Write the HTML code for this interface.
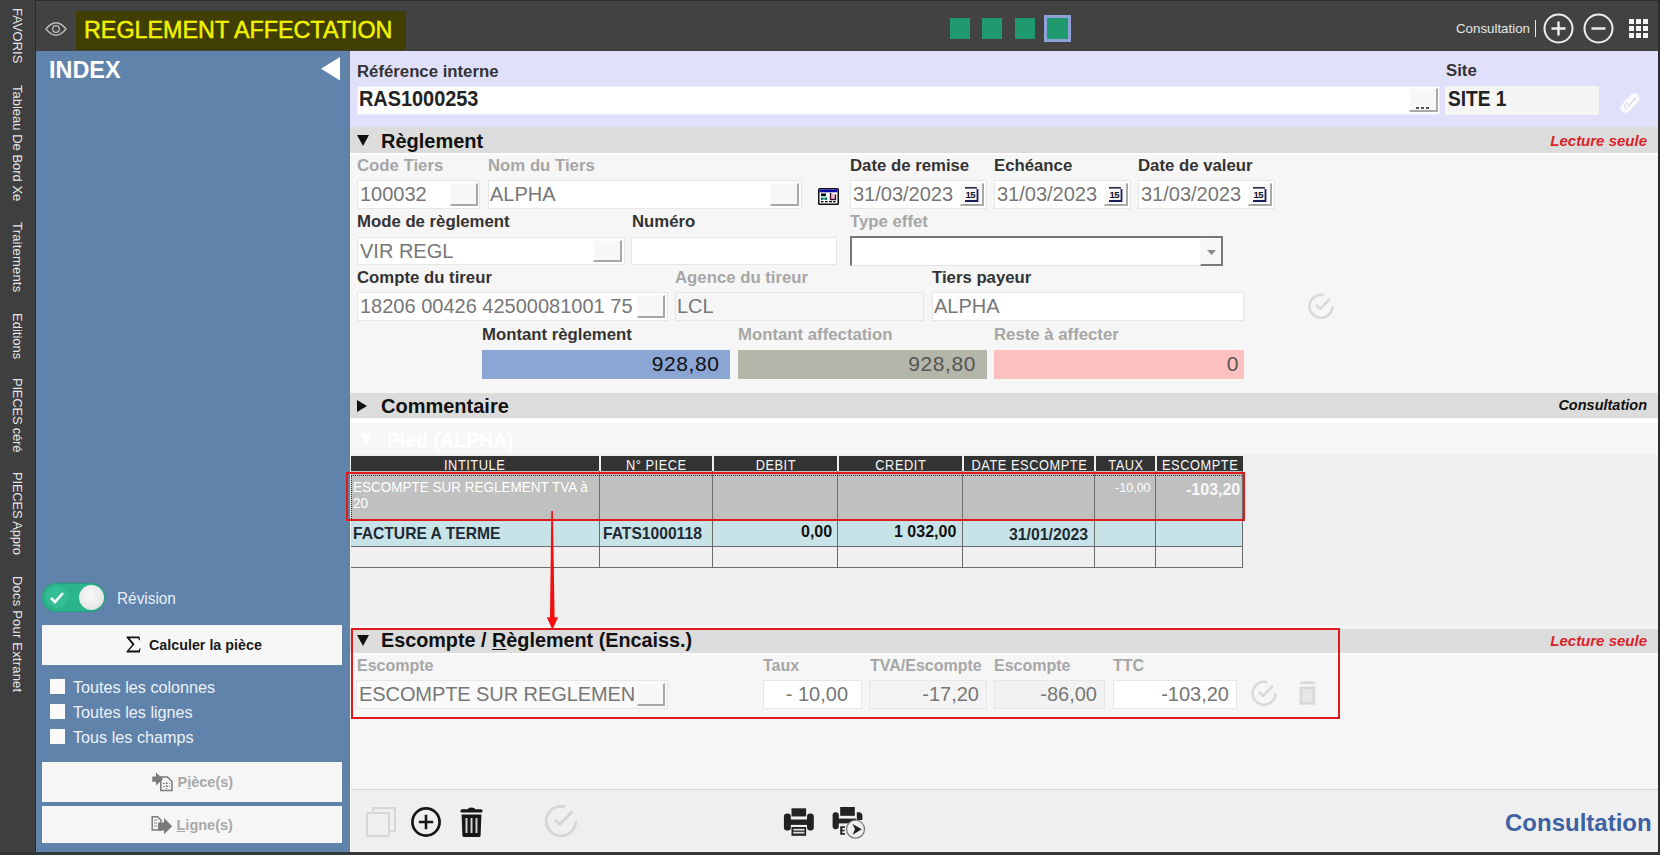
<!DOCTYPE html>
<html><head><meta charset="utf-8">
<style>
*{margin:0;padding:0;box-sizing:border-box}
html,body{width:1660px;height:855px;overflow:hidden;background:#2e2e2e;font-family:"Liberation Sans",sans-serif}
.a{position:absolute}
.vt{position:absolute;color:#e6e6e6;font-size:13px;white-space:nowrap;transform-origin:0 0;transform:rotate(90deg)}
.lbl{position:absolute;font-size:16px;font-weight:bold;color:#333;white-space:nowrap;line-height:1}

.inp{position:absolute;background:#fff;border:1px solid #e6e6e6;height:29px}
.val{position:absolute;font-size:20px;color:#777;white-space:nowrap;line-height:1}
.btn3{position:absolute;background:#f7f7f7;border-right:2px solid #a8a8a8;border-bottom:2px solid #a8a8a8;border-top:1px solid #fdfdfd;border-left:1px solid #fdfdfd}
.t{position:absolute;white-space:nowrap;line-height:1}
.lb{font-size:16.75px;font-weight:bold;color:#333}
.lg{color:#a6a6a6}
.hd{position:absolute;top:456px;height:15px;background:#333;color:#f6f6f6;font-size:14.5px;line-height:18px;text-align:center;white-space:nowrap;overflow:hidden}
.hd span{display:inline-block;transform:scaleX(0.885);letter-spacing:0.6px}
.nar{display:inline-block;transform-origin:0 0}
.band{position:absolute;left:350px;width:1308px;background:#dcdcdc}
.bt{position:absolute;font-size:19px;font-weight:bold;color:#111;white-space:nowrap;line-height:1}
</style></head><body>
<!-- left vertical sidebar -->
<div class="a" style="left:0;top:0;width:35px;height:855px;background:#3f3f3f"></div>
<div class="a" style="left:35px;top:0;width:1px;height:855px;background:#252a2e"></div>
<div class="vt" style="left:25px;top:8px">FAVORIS</div>
<div class="vt" style="left:25px;top:85px">Tableau De Bord Xe</div>
<div class="vt" style="left:25px;top:222px;letter-spacing:0.2px">Traitements</div>
<div class="vt" style="left:25px;top:313px">Editions</div>
<div class="vt" style="left:25px;top:378px;letter-spacing:-0.22px">PIECES céré</div>
<div class="vt" style="left:25px;top:472px;letter-spacing:-0.2px">PIECES Appro</div>
<div class="vt" style="left:25px;top:576px;letter-spacing:0.2px">Docs Pour Extranet</div>

<!-- top bar -->
<div class="a" style="left:36px;top:0;width:1624px;height:51px;background:#424242;border-top:1px solid #2c2c2c"></div>
<svg class="a" style="left:45px;top:21px" width="22" height="16" viewBox="0 0 22 16"><path d="M1 8 Q11 -4.5 21 8 Q11 20.5 1 8Z" fill="none" stroke="#bdbdbd" stroke-width="1.3"/><circle cx="11" cy="8" r="3.3" fill="none" stroke="#bdbdbd" stroke-width="1.3"/></svg>
<div class="a" style="left:76px;top:11px;width:330px;height:39px;background:#403e00"></div>
<div class="t" style="left:83.8px;top:17.5px;font-size:24.5px;color:#f2f200;-webkit-text-stroke:0.5px #f2f200"><span class="nar" style="transform:scaleX(0.952)">REGLEMENT AFFECTATION</span></div>
<div class="a" style="left:950px;top:18px;width:20px;height:21px;background:#1f9a6e"></div>
<div class="a" style="left:982px;top:18px;width:20px;height:21px;background:#1f9a6e"></div>
<div class="a" style="left:1015px;top:18px;width:20px;height:21px;background:#1f9a6e"></div>
<div class="a" style="left:1044px;top:15px;width:27px;height:27px;background:#1f9a6e;border:3.5px solid #8fa2d8"></div>
<div class="t" style="left:1456px;top:21.5px;font-size:13.3px;color:#e6e6e6">Consultation</div>
<div class="a" style="left:1535px;top:20px;width:1px;height:17px;background:#e6e6e6"></div>
<svg class="a" style="left:1543px;top:13px" width="32" height="32" viewBox="0 0 32 32"><circle cx="15.5" cy="15.5" r="14" fill="none" stroke="#eee" stroke-width="2"/><path d="M15.5 8.5v14M8.5 15.5h14" stroke="#eee" stroke-width="2.4"/></svg>
<svg class="a" style="left:1583px;top:13px" width="32" height="32" viewBox="0 0 32 32"><circle cx="15.5" cy="15.5" r="14" fill="none" stroke="#eee" stroke-width="2"/><path d="M8.5 15.5h14" stroke="#eee" stroke-width="2.4"/></svg>
<svg class="a" style="left:1628px;top:18px" width="22" height="22" viewBox="0 0 22 22" fill="#f4f4f4"><rect x="1" y="1" width="5" height="5"/><rect x="8" y="1" width="5" height="5"/><rect x="15" y="1" width="5" height="5"/><rect x="1" y="8" width="5" height="5"/><rect x="8" y="8" width="5" height="5"/><rect x="15" y="8" width="5" height="5"/><rect x="1" y="15" width="5" height="5"/><rect x="8" y="15" width="5" height="5"/><rect x="15" y="15" width="5" height="5"/></svg>

<!-- blue index panel -->
<div class="a" style="left:36px;top:51px;width:314px;height:801px;background:#6083ab;box-shadow:inset -2px 0 #66809e"></div>
<div class="t" style="left:49px;top:57.5px;font-size:24.5px;font-weight:bold;color:#fff"><span class="nar" style="transform:scaleX(0.955)">INDEX</span></div>
<svg class="a" style="left:321px;top:56.5px" width="20" height="24"><path d="M0 11.7 L19 0 L19 23.4Z" fill="#fff"/></svg>


<!-- sidebar bottom items -->
<div class="a" style="left:42px;top:583px;width:63px;height:29px;border-radius:15px;background:#2cb48b;box-shadow:inset 0 0 0 1px #22a07b"></div>
<div class="a" style="left:46px;top:586px;width:22px;height:22px;border-radius:11px;background:#34be95"></div>
<svg class="a" style="left:49px;top:591px" width="16" height="14"><path d="M2 7 L6 11 L14 2" fill="none" stroke="#f4fbf8" stroke-width="2.6"/></svg>
<div class="a" style="left:78.5px;top:585px;width:25px;height:25px;border-radius:50%;background:radial-gradient(circle at 45% 40%,#fafafa,#dcdcdc)"></div>
<div class="t" style="left:116.5px;top:591px;font-size:16px;color:#e9eff6"><span class="nar" style="transform:scaleX(0.96)">Révision</span></div>
<div class="a" style="left:42px;top:625px;width:300px;height:40px;background:#f7f7f7"></div>
<svg class="a" style="left:126px;top:636px" width="15" height="17" viewBox="0 0 15 17"><path d="M0.5 0.5H13.5L14 4.2H13L12.2 2.2H3.6L8.6 8.3L3 14.6H12.6L13.6 12.4H14.6L13.8 16.5H0.5V15.6L6.3 8.6L0.5 1.6Z" fill="#111"/></svg>
<div class="t" style="left:149px;top:637.5px;font-size:14.3px;font-weight:bold;color:#1a1a1a">Calculer la pièce</div>
<div class="a" style="left:50px;top:679px;width:15px;height:15px;background:#fafafa"></div>
<div class="a" style="left:50px;top:703.5px;width:15px;height:15px;background:#fafafa"></div>
<div class="a" style="left:50px;top:728.5px;width:15px;height:15px;background:#fafafa"></div>
<div class="t" style="left:73px;top:678.5px;font-size:16.2px;color:#eef2f7">Toutes les colonnes</div>
<div class="t" style="left:73px;top:703.5px;font-size:16.2px;color:#eef2f7">Toutes les lignes</div>
<div class="t" style="left:73px;top:728.5px;font-size:16.2px;color:#eef2f7">Tous les champs</div>
<div class="a" style="left:42px;top:762px;width:300px;height:40px;background:#f6f6f6"></div>
<div class="a" style="left:42px;top:806px;width:300px;height:37px;background:#f6f6f6"></div>
<svg class="a" style="left:151px;top:772px" width="23" height="20" viewBox="0 0 23 20"><path d="M9.8 5H16.5L21 9.5V18.6H9.8Z" fill="#f4f4f4" stroke="#7a7a7a" stroke-width="1.5"/><path d="M12 11.5H19M12 14.5H19M15.5 10V17" stroke="#888" stroke-width="1.2" stroke-dasharray="2 1"/><path d="M1.3 4.4H5V0.5L12 7L5 13.6V9.7H1.3Z" fill="#7a7a7a"/></svg>
<div class="t" style="left:177.5px;top:774.5px;font-size:14.5px;font-weight:bold;color:#a8a8a8">P<u>i</u>èce(s)</div>
<svg class="a" style="left:151px;top:816px" width="23" height="20" viewBox="0 0 23 20"><path d="M1.2 0.8H6.5L10 4.3V14H1.2Z" fill="#f4f4f4" stroke="#7a7a7a" stroke-width="1.5"/><path d="M3 4H6M3 7H6M3 10H6" stroke="#888" stroke-width="1.2"/><path d="M7 6.5H13V2L21.2 10.2L13 18.3V14.4H7Z" fill="#7a7a7a"/></svg>
<div class="t" style="left:176.5px;top:818px;font-size:14.5px;font-weight:bold;color:#a8a8a8"><u>L</u>igne(s)</div>

<!-- main panel -->
<div class="a" style="left:350px;top:51px;width:1308px;height:801px;background:#f6f6f6"></div>
<div class="a" style="left:350px;top:51px;width:1308px;height:76px;background:#e0e0fa"></div>
<div class="a" style="left:1658px;top:0;width:2px;height:855px;background:#2e2e2e"></div>
<div class="a" style="left:0;top:852px;width:1660px;height:3px;background:#303838"></div>


<!-- header lavender content -->
<div class="t lb" style="left:357px;top:63.7px">Référence interne</div>
<div class="inp" style="left:357px;top:86px;width:1083px;height:29px;border-color:#ececf6"></div>
<div class="btn3" style="left:1409px;top:88px;width:29px;height:24px"></div>
<div class="a" style="left:1416px;top:107px;width:3px;height:2px;background:#555"></div><div class="a" style="left:1421px;top:107px;width:3px;height:2px;background:#555"></div><div class="a" style="left:1426px;top:107px;width:3px;height:2px;background:#555"></div>
<div class="t" style="left:359px;top:88.5px;font-size:21.5px;font-weight:bold;color:#222"><span class="nar" style="transform:scaleX(0.925)">RAS1000253</span></div>
<div class="t lb" style="left:1446px;top:62.7px">Site</div>
<div class="a" style="left:1445px;top:86px;width:154px;height:29px;background:#f5f5f5"></div>
<div class="t" style="left:1448px;top:88.5px;font-size:21.5px;font-weight:bold;color:#222"><span class="nar" style="transform:scaleX(0.89)">SITE 1</span></div>
<svg class="a" style="left:1615px;top:88px" width="30" height="30" viewBox="0 0 30 30"><g transform="rotate(43 15 15)"><rect x="10.8" y="4.2" width="8.4" height="21.6" rx="4.2" fill="#fbfbff" stroke="#fbfbff" stroke-width="1.6"/><path d="M15.8 7.5V18.5" stroke="#d2d2de" stroke-width="1.4" stroke-linecap="round"/><path d="M12.8 16V20.5A2.2 2.2 0 0 0 17 20.5" fill="none" stroke="#dedeea" stroke-width="1.2"/></g></svg>

<!-- Reglement band -->
<div class="band" style="top:127px;height:26px"></div>
<div class="a" style="left:350px;top:153px;width:1308px;height:2px;background:#fdfdfd"></div>
<svg class="a" style="left:357px;top:135px" width="12" height="11"><path d="M0 0H12L6 11Z" fill="#111"/></svg>
<div class="t bt" style="left:381px;top:131px;font-size:20px">Règlement</div>
<div class="t" style="right:13px;top:133px;font-size:15px;font-weight:bold;font-style:italic;color:#db1f2a">Lecture seule</div>

<!-- row1 labels -->
<div class="t lb lg" style="left:357px;top:158.2px">Code Tiers</div>
<div class="t lb lg" style="left:488px;top:158.2px">Nom du Tiers</div>
<div class="t lb" style="left:850px;top:158.2px">Date de remise</div>
<div class="t lb" style="left:994px;top:158.2px">Echéance</div>
<div class="t lb" style="left:1138px;top:158.2px">Date de valeur</div>
<!-- row1 inputs -->
<div class="inp" style="left:357px;top:180px;width:123px"></div>
<div class="btn3" style="left:450px;top:183px;width:28px;height:23px"></div>
<div class="t val" style="left:360px;top:184px">100032</div>
<div class="inp" style="left:488px;top:180px;width:314px"></div>
<div class="btn3" style="left:770px;top:183px;width:29px;height:23px"></div>
<div class="t val" style="left:490px;top:184px">ALPHA</div>
<svg class="a" style="left:818px;top:188px" width="21" height="17" viewBox="0 0 21 17"><rect x="0.75" y="0.75" width="19.5" height="15.5" rx="0.8" fill="#fff" stroke="#111" stroke-width="1.5"/><rect x="1.5" y="1.5" width="18" height="2.8" fill="#0a0aa8"/><rect x="3" y="5.5" width="5" height="2.5" fill="#000"/><rect x="3" y="8" width="7" height="4" fill="#aef5e8"/><rect x="3" y="9.5" width="2.5" height="2.5" fill="#1e6e68"/><rect x="6.5" y="9.5" width="2.5" height="2.5" fill="#1e6e68"/><path d="M12.5 5V11.5H17.5V6.5" fill="#e8c0d0" stroke="#3a1030" stroke-width="1.4"/><rect x="3" y="13" width="2.5" height="1.3" fill="#000"/><rect x="7" y="13" width="2.5" height="1.3" fill="#000"/><rect x="11" y="13" width="3" height="1.3" fill="#000"/><rect x="15" y="13" width="2.5" height="1.3" fill="#000"/></svg>
<div class="inp" style="left:850px;top:180px;width:137px"></div>
<div class="btn3 cal" style="left:960px;top:183px;width:24px;height:23px"></div>
<div class="t val" style="left:853px;top:184px">31/03/2023</div>
<div class="inp" style="left:994px;top:180px;width:137px"></div>
<div class="btn3 cal" style="left:1104px;top:183px;width:24px;height:23px"></div>
<div class="t val" style="left:997px;top:184px">31/03/2023</div>
<div class="inp" style="left:1138px;top:180px;width:137px"></div>
<div class="btn3 cal" style="left:1248px;top:183px;width:24px;height:23px"></div>
<div class="t val" style="left:1141px;top:184px">31/03/2023</div>

<svg class="a" style="left:965px;top:187px" width="15" height="16" viewBox="0 0 15 16"><rect x="0" y="0" width="12" height="1.6" fill="#2a2a40"/><text x="0.5" y="11" font-family="Liberation Sans" font-weight="bold" font-size="9.5" fill="#111" letter-spacing="-0.5">15</text><path d="M12.5 2V14H0" fill="none" stroke="#1c1c58" stroke-width="1.8"/></svg>
<svg class="a" style="left:1109px;top:187px" width="15" height="16" viewBox="0 0 15 16"><rect x="0" y="0" width="12" height="1.6" fill="#2a2a40"/><text x="0.5" y="11" font-family="Liberation Sans" font-weight="bold" font-size="9.5" fill="#111" letter-spacing="-0.5">15</text><path d="M12.5 2V14H0" fill="none" stroke="#1c1c58" stroke-width="1.8"/></svg>
<svg class="a" style="left:1253px;top:187px" width="15" height="16" viewBox="0 0 15 16"><rect x="0" y="0" width="12" height="1.6" fill="#2a2a40"/><text x="0.5" y="11" font-family="Liberation Sans" font-weight="bold" font-size="9.5" fill="#111" letter-spacing="-0.5">15</text><path d="M12.5 2V14H0" fill="none" stroke="#1c1c58" stroke-width="1.8"/></svg>
<!-- row2 -->
<div class="t lb" style="left:357px;top:213.7px">Mode de règlement</div>
<div class="t lb" style="left:632px;top:213.7px">Numéro</div>
<div class="t lb lg" style="left:850px;top:213.7px">Type effet</div>
<div class="inp" style="left:357px;top:237px;width:268px;height:28px"></div>
<div class="btn3" style="left:593px;top:240px;width:29px;height:22px"></div>
<div class="t val" style="left:360px;top:240.5px">VIR REGL</div>
<div class="inp" style="left:631px;top:237px;width:206px;height:28px"></div>
<div class="a" style="left:850px;top:236px;width:373px;height:30px;background:#fff;border-top:2px solid #777;border-left:2px solid #777;border-bottom:1px solid #e4e4e4"></div>
<div class="a" style="left:1200px;top:238px;width:23px;height:28px;background:#f7f7f7;border-left:1px solid #fafafa;border-right:2px solid #7a7a7a;border-bottom:2px solid #7a7a7a"></div>
<svg class="a" style="left:1207px;top:250px" width="9" height="6"><path d="M0 0H9L4.5 5Z" fill="#8a8a8a"/></svg>

<!-- row3 -->
<div class="t lb" style="left:357px;top:270px">Compte du tireur</div>
<div class="t lb lg" style="left:675px;top:270px">Agence du tireur</div>
<div class="t lb" style="left:932px;top:270px">Tiers payeur</div>
<div class="inp" style="left:357px;top:292px;width:311px"></div>
<div class="btn3" style="left:637px;top:295px;width:28px;height:23px"></div>
<div class="t val" style="left:360px;top:296px">18206 00426 42500081001 75</div>
<div class="inp" style="left:675px;top:292px;width:249px;background:#f6f6f6"></div>
<div class="t val" style="left:677px;top:296px">LCL</div>
<div class="inp" style="left:932px;top:292px;width:312px"></div>
<div class="t val" style="left:934px;top:296px">ALPHA</div>
<svg class="a" style="left:1306.5px;top:292.7px" width="28" height="28" viewBox="0 0 28 28"><path d="M16.98 2.19 A11.5 11.5 0 1 0 25.5 13.3" fill="none" stroke="#d9d9d9" stroke-width="2.5"/><path d="M9 12.3 L13.3 15.8 L23 5.7" fill="none" stroke="#d9d9d9" stroke-width="2.5"/></svg>

<!-- row4 -->
<div class="t lb" style="left:482px;top:327.2px">Montant règlement</div>
<div class="t lb lg" style="left:738px;top:327.2px">Montant affectation</div>
<div class="t lb lg" style="left:994px;top:327.2px">Reste à affecter</div>
<div class="a" style="left:482px;top:350px;width:248px;height:29px;background:#8ba6d4"></div>
<div class="t" style="right:940.5px;top:353px;font-size:21px;color:#111;letter-spacing:0.6px">928,80</div>
<div class="a" style="left:738px;top:350px;width:249px;height:29px;background:#b5b6aa"></div>
<div class="t" style="right:684px;top:353px;font-size:21px;color:#555;letter-spacing:0.6px">928,80</div>
<div class="a" style="left:994px;top:350px;width:250px;height:29px;background:#ffc0c0"></div>
<div class="t" style="right:421.5px;top:353px;font-size:21px;color:#555">0</div>

<!-- Commentaire band -->
<div class="band" style="top:393px;height:25px"></div>
<svg class="a" style="left:357px;top:400px" width="11" height="12"><path d="M0 0V12L10 6Z" fill="#111"/></svg>
<div class="t bt" style="left:381px;top:395.5px;font-size:20px">Commentaire</div>
<div class="t" style="right:13px;top:398px;font-size:14.5px;font-weight:bold;font-style:italic;color:#111">Consultation</div>
<div class="a" style="left:350px;top:418px;width:1308px;height:5px;background:#fff"></div>
<div class="a" style="left:350px;top:423px;width:1308px;height:31px;background:#f7f7f7"></div>
<div class="a" style="left:350px;top:454px;width:1308px;height:171px;background:#efefef"></div>
<svg class="a" style="left:360px;top:433px" width="12" height="11"><path d="M0 0H12L6 11Z" fill="#fff"/></svg>
<div class="t bt" style="left:387px;top:431px;font-size:19.5px;color:#fff">Pied (ALPHA)</div>


<!-- table -->
<div class="a" style="left:351px;top:456px;width:892px;height:15px;background:#f0f0f0"></div>
<div class="hd" style="left:351px;width:248px"><span>INTITULE</span></div>
<div class="hd" style="left:601px;width:111px"><span>N° PIECE</span></div>
<div class="hd" style="left:714px;width:123px"><span>DEBIT</span></div>
<div class="hd" style="left:839px;width:123px"><span>CREDIT</span></div>
<div class="hd" style="left:964px;width:130px"><span>DATE ESCOMPTE</span></div>
<div class="hd" style="left:1096px;width:59px"><span>TAUX</span></div>
<div class="hd" style="left:1157px;width:86px"><span>ESCOMPTE</span></div>
<div class="a" style="left:351px;top:471px;width:892px;height:50px;background:#c0c0c0"></div>
<div class="a" style="left:351px;top:521px;width:892px;height:25px;background:#c8e3e7"></div>
<div class="a" style="left:351px;top:546px;width:892px;height:1px;background:#6c6c6c"></div>
<div class="a" style="left:351px;top:547px;width:892px;height:20px;background:#f0f0f0"></div>
<div class="a" style="left:351px;top:567px;width:892px;height:1px;background:#6c6c6c"></div>
<div class="a" style="left:1242px;top:471px;width:1px;height:97px;background:#6c6c6c"></div>
<div class="a" style="left:599px;top:471px;width:1px;height:97px;background:#6c6c6c"></div>
<div class="a" style="left:712px;top:471px;width:1px;height:97px;background:#6c6c6c"></div>
<div class="a" style="left:837px;top:471px;width:1px;height:97px;background:#6c6c6c"></div>
<div class="a" style="left:962px;top:471px;width:1px;height:97px;background:#6c6c6c"></div>
<div class="a" style="left:1094px;top:471px;width:1px;height:97px;background:#6c6c6c"></div>
<div class="a" style="left:1155px;top:471px;width:1px;height:97px;background:#6c6c6c"></div>
<div class="a" style="left:351px;top:475px;width:891px;height:44px;border:1px dotted #333;border-right:none;border-bottom:none"></div>
<div class="t" style="left:353px;top:479px;font-size:15px;color:#fff;line-height:16px"><span class="nar" style="transform:scaleX(0.9)">ESCOMPTE SUR REGLEMENT TVA à<br>20</span></div>
<div class="t" style="left:1115px;top:480.5px;font-size:13.5px;color:#fff;line-height:1"><span class="nar" style="transform:scaleX(0.93)">-10,00</span></div>
<div class="t" style="left:1186px;top:481.5px;font-size:16px;font-weight:bold;color:#f8f8f8">-103,20</div>
<div class="t" style="left:353px;top:525px;font-size:17px;font-weight:bold;color:#1e2a33"><span class="nar" style="transform:scaleX(0.92)">FACTURE A TERME</span></div>
<div class="t" style="left:603px;top:525px;font-size:17px;font-weight:bold;color:#1e2a33"><span class="nar" style="transform:scaleX(0.92)">FATS1000118</span></div>
<div class="t" style="left:801px;top:524px;font-size:16px;font-weight:bold;color:#111">0,00</div>
<div class="t" style="left:894px;top:524px;font-size:16px;font-weight:bold;color:#111">1 032,00</div>
<div class="t" style="left:1009px;top:526px;font-size:17px;font-weight:bold;color:#1e2a33"><span class="nar" style="transform:scaleX(0.93)">31/01/2023</span></div>

<!-- red annotations -->
<div class="a" style="left:346px;top:472px;width:899px;height:49px;border:2px solid #e01a1a"></div>
<svg class="a" style="left:540px;top:508px" width="24" height="124" viewBox="0 0 24 124"><path d="M11.3 3L12.9 3L14.6 109.5L18.2 109L12.4 121.8L6.8 109L10 109.5Z" fill="#f40d0d"/></svg>

<!-- Escompte section -->
<div class="band" style="top:629px;height:24px"></div>
<div class="a" style="left:350px;top:653px;width:1308px;height:2px;background:#fdfdfd"></div>
<svg class="a" style="left:357px;top:635px" width="12" height="11"><path d="M0 0H12L6 11Z" fill="#111"/></svg>
<div class="t bt" style="left:381px;top:631px;font-size:19.8px">Escompte / <u style="text-decoration-thickness:1px;text-underline-offset:2px">R</u>èglement (Encaiss.)</div>
<div class="t" style="right:13px;top:633px;font-size:15px;font-weight:bold;font-style:italic;color:#db1f2a">Lecture seule</div>
<div class="a" style="left:351px;top:628px;width:989px;height:91px;border:2px solid #e01a1a"></div>
<div class="t lb lg" style="left:357px;top:657.7px;font-size:16px">Escompte</div>
<div class="t lb lg" style="left:763px;top:657.7px;font-size:16px">Taux</div>
<div class="t lb lg" style="left:870px;top:657.7px;font-size:16px">TVA/Escompte</div>
<div class="t lb lg" style="left:994px;top:657.7px;font-size:16px">Escompte</div>
<div class="t lb lg" style="left:1113px;top:657.7px;font-size:16px">TTC</div>
<div class="inp" style="left:356px;top:680px;width:312px;background:#fafafa"></div>
<div class="btn3" style="left:637px;top:683px;width:28px;height:23px"></div>
<div class="t val" style="left:359px;top:684px;letter-spacing:-0.08px">ESCOMPTE SUR REGLEMEN</div>
<div class="inp" style="left:763px;top:680px;width:99px"></div>
<div class="t val" style="right:812px;top:684px">- 10,00</div>
<div class="inp" style="left:869px;top:680px;width:118px;background:#f4f4f4"></div>
<div class="t val" style="right:681px;top:684px">-17,20</div>
<div class="inp" style="left:994px;top:680px;width:111px;background:#f2f2f2"></div>
<div class="t val" style="right:563px;top:684px">-86,00</div>
<div class="inp" style="left:1113px;top:680px;width:124px"></div>
<div class="t val" style="right:431px;top:684px">-103,20</div>
<svg class="a" style="left:1250px;top:680px" width="28" height="28" viewBox="0 0 28 28"><path d="M16.98 2.19 A11.5 11.5 0 1 0 25.5 13.3" fill="none" stroke="#d9d9d9" stroke-width="2.5"/><path d="M9 12.3 L13.3 15.8 L23 5.7" fill="none" stroke="#d9d9d9" stroke-width="2.5"/></svg>
<svg class="a" style="left:1298px;top:680px" width="19" height="25" viewBox="0 0 19 25"><path d="M1 4.2Q1 1 9.5 1Q18 1 18 4.2Z" fill="#dadada"/><rect x="2.8" y="7.8" width="13" height="15.6" fill="#e6e6e6" stroke="#d8d8d8" stroke-width="2.5"/></svg>

<!-- bottom toolbar -->
<div class="a" style="left:351px;top:789px;width:1307px;height:1px;background:#dadada"></div>
<div class="a" style="left:351px;top:790px;width:1307px;height:62px;background:#efefef"></div>
<svg class="a" style="left:366px;top:807px" width="31" height="31" viewBox="0 0 31 31"><rect x="1" y="6" width="22" height="23" fill="none" stroke="#d6d6d6" stroke-width="2"/><path d="M7 5V1H29V24H24" fill="none" stroke="#d6d6d6" stroke-width="2"/></svg>
<svg class="a" style="left:410px;top:806px" width="32" height="32" viewBox="0 0 32 32"><circle cx="16" cy="16" r="13.6" fill="none" stroke="#161616" stroke-width="2.7"/><path d="M16 8.8V23.2M8.8 16H23.2" stroke="#161616" stroke-width="2.6"/></svg>
<svg class="a" style="left:460px;top:807px" width="23" height="31" viewBox="0 0 23 31"><path d="M8 2.2Q8 0.4 11.5 0.4Q15 0.4 15 2.2H21Q22.6 2.2 22.6 4Q22.6 5.6 21 5.6H2Q0.4 5.6 0.4 4Q0.4 2.2 2 2.2Z" fill="#161616"/><path d="M1.6 7.5H21.4L20.6 28.4Q20.5 30 19 30H4Q2.5 30 2.4 28.4Z" fill="#161616"/><path d="M6.5 11V26M11.5 11V26M16.5 11V26" stroke="#d0d0d0" stroke-width="2"/></svg>
<svg class="a" style="left:543px;top:804px" width="36" height="36" viewBox="0 0 28 28"><path d="M16.98 2.19 A11.5 11.5 0 1 0 25.5 13.3" fill="none" stroke="#d6d6d6" stroke-width="2.2"/><path d="M9 12.3 L13.3 15.8 L23 5.7" fill="none" stroke="#d6d6d6" stroke-width="2.2"/></svg>
<svg class="a" style="left:783px;top:807px" width="32" height="31" viewBox="0 0 32 31"><rect x="8.5" y="1.3" width="14.6" height="8.6" fill="#222"/><rect x="0.9" y="6.6" width="7" height="16.9" rx="3.2" fill="#222"/><rect x="24" y="6.6" width="6.8" height="16.9" rx="3.2" fill="#222"/><rect x="5" y="12.5" width="22" height="5.4" fill="#222"/><rect x="8.5" y="20" width="14.6" height="8.8" fill="#222"/><rect x="10.2" y="21.8" width="11.3" height="1.8" fill="#d8d8d8"/><rect x="10.2" y="24.8" width="11.3" height="1.8" fill="#d8d8d8"/><path d="M7.9 10.4H24M7.9 19.2H24" stroke="#efefef" stroke-width="1.6"/></svg>
<svg class="a" style="left:831px;top:806px" width="36" height="38" viewBox="0 0 36 38"><rect x="9.2" y="1" width="14.6" height="8.9" fill="#222"/><rect x="1.6" y="6.3" width="6.2" height="16.9" rx="3" fill="#222"/><path d="M25.8 6.3H27.4Q31.4 6.3 31.4 10.3V14H25.8Z" fill="#222"/><rect x="5" y="12.6" width="20" height="4.8" fill="#222"/><path d="M8.4 10.6H25" stroke="#efefef" stroke-width="1.4"/><path d="M9.2 20.2H13.9V22H11.3V23.7H13.6V25.3H11.3V27H13.9V28.8H9.2Z" fill="#222"/><circle cx="24.5" cy="23.2" r="9" fill="#f0f0f0" stroke="#7a7a7a" stroke-width="1.3"/><path d="M21.5 17.9L30.8 23.2L21.5 28.8L24 23.2Z" fill="#222"/></svg>
<div class="t" style="left:1505px;top:811px;font-size:24px;font-weight:bold;color:#3d62a3">Consultation</div>

</body></html>
